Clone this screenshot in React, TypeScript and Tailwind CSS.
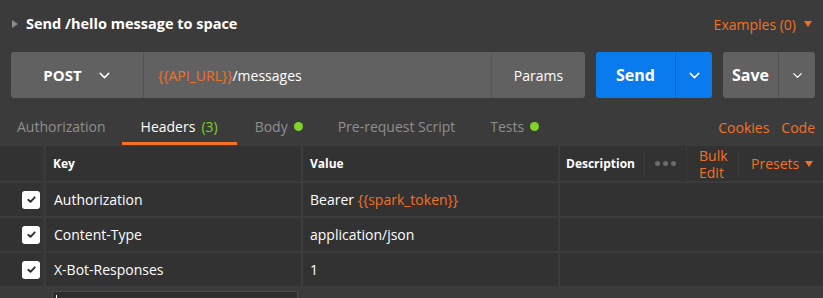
import { ChevronDown } from "lucide-react";

const orange = "text-[#f47023]";

function Check() {
  return (
    <div className="flex h-[18px] w-[18px] items-center justify-center rounded-[3px] bg-white">
      <svg viewBox="0 0 12 12" className="h-[11px] w-[11px]" fill="none" stroke="#2b2b2b" strokeWidth={2} strokeLinecap="round" strokeLinejoin="round">
        <path d="M2.5 6.3l2.4 2.3 4.6-5" />
      </svg>
    </div>
  );
}

function Tab({ label, active, extra, pad }: { label: string; active?: boolean; extra?: React.ReactNode; pad: string }) {
  return (
    <div
      className={`flex h-full items-center gap-[6px] border-b-[3px] ${pad} ${
        active ? "border-[#f47023] text-white" : "border-transparent text-[#8e8e8e]"
      }`}
    >
      <span>{label}</span>
      {extra}
    </div>
  );
}

const rows = [
  { key: "Authorization", value: <span>Bearer <span className={orange}>{"{{spark_token}}"}</span></span> },
  { key: "Content-Type", value: <span>application/json</span> },
  { key: "X-Bot-Responses", value: <span>1</span> },
];

export default function App() {
  return (
    <div
      className="h-[298px] w-[823px] overflow-hidden bg-[#3b3b3b] text-[13px] text-white"
      style={{ fontFamily: '"Open Sans", "Noto Sans", sans-serif' }}
    >
      {/* title */}
      <div className="flex h-[48px] items-center justify-between pl-[12px] pr-[11px]">
        <div className="flex items-center gap-[8px]">
          <svg viewBox="0 0 6 8" className="h-[8px] w-[6px]">
            <path d="M0 0l6 4-6 4z" fill="#8a8a8a" />
          </svg>
          <span className="text-[14.5px] font-bold">Send /hello message to space</span>
        </div>
        <div className={`flex items-center gap-[8px] text-[14px] ${orange}`}>
          <span>Examples (0)</span>
          <svg viewBox="0 0 8 6" className="h-[6px] w-[8px]">
            <path d="M0 0h8l-4 6z" fill="#f47023" />
          </svg>
        </div>
      </div>

      {/* request bar */}
      <div className="mt-[4px] flex h-[46px] gap-[11px] pl-[11px] pr-[8px]">
        <div className="flex w-[574px] overflow-hidden rounded-[3px] bg-[#616161]">
          <div className="flex w-[133px] items-center justify-center gap-[14px] border-r border-[#525252] pl-[2px]">
            <span className="text-[15px] font-bold">POST</span>
            <ChevronDown size={17} strokeWidth={2} />
          </div>
          <div className="flex flex-1 items-center border-r border-[#555555] pl-[14px] text-[14px]">
            <span className={orange}>{"{{API_URL}}"}</span>
            <span>/messages</span>
          </div>
          <div className="flex w-[93px] items-center justify-center text-[14px]">Params</div>
        </div>
        <div className="flex w-[116px] overflow-hidden rounded-[3px] bg-[#097bed]">
          <div className="flex w-[80px] items-center justify-center border-r border-[#0a66c2] text-[16px] font-bold">Send</div>
          <div className="flex flex-1 items-center justify-center">
            <ChevronDown size={17} strokeWidth={2} />
          </div>
        </div>
        <div className="flex w-[92px] overflow-hidden rounded-[3px] bg-[#616161]">
          <div className="flex w-[56px] items-center justify-center border-r border-[#525252] text-[16px] font-bold">Save</div>
          <div className="flex flex-1 items-center justify-center">
            <ChevronDown size={15} strokeWidth={2} />
          </div>
        </div>
      </div>

      {/* tabs */}
      <div className="mt-[12px] flex h-[35px] items-stretch justify-between pr-[8px] text-[14px]">
        <div className="flex">
          <Tab label="Authorization" pad="pl-[17px] pr-[16px]" />
          <Tab label="Headers" active pad="px-[19px]" extra={<span className="text-[#7fd12b]">(3)</span>} />
          <Tab label="Body" pad="px-[18px]" extra={<span className="h-[9px] w-[9px] rounded-full bg-[#7fd12b]" />} />
          <Tab label="Pre-request Script" pad="px-[17px]" />
          <Tab label="Tests" pad="px-[18px]" extra={<span className="h-[9px] w-[9px] rounded-full bg-[#7fd12b]" />} />
        </div>
        <div className={`flex items-center gap-[12px] ${orange}`}>
          <span>Cookies</span>
          <span>Code</span>
        </div>
      </div>

      {/* table */}
      <div className="mt-px flex flex-col gap-[2px] bg-[#3b3b3b]">
        <div className="flex h-[35px] gap-[2px]">
          <div className="w-[44px] border-r-[3px] border-[#363636] bg-[#323232]" />
          <div className="flex w-[255px] items-center bg-[#323232] pl-[7px] text-[12px] font-bold">Key</div>
          <div className="flex w-[255px] items-center bg-[#323232] pl-[7px] text-[12px] font-bold">Value</div>
          <div className="flex flex-1 items-center bg-[#323232] text-[12px]">
            <div className="flex w-[84px] items-center pl-[6px] font-bold">Description</div>
            <div className="flex h-[22px] w-[42px] items-center justify-center gap-[3px] border-l border-[#3c3c3c]">
              <span className="h-[5px] w-[5px] rounded-full bg-[#6a6a6a]" />
              <span className="h-[5px] w-[5px] rounded-full bg-[#6a6a6a]" />
              <span className="h-[5px] w-[5px] rounded-full bg-[#6a6a6a]" />
            </div>
            <div className={`flex h-full w-[52px] items-center border-l border-[#3c3c3c] pl-[12px] text-[14px] leading-[17px] ${orange}`}>
              <span>
                Bulk
                <br />
                Edit
              </span>
            </div>
            <div className={`flex h-[22px] flex-1 items-center gap-[6px] border-l border-[#3c3c3c] pl-[12px] text-[14px] ${orange}`}>
              <span>Presets</span>
              <svg viewBox="0 0 8 6" className="h-[6px] w-[8px]">
                <path d="M0 0h8l-4 6z" fill="#f47023" />
              </svg>
            </div>
          </div>
        </div>
        {rows.map((r) => (
          <div key={r.key} className="flex h-[33px] gap-[2px]">
            <div className="flex w-[44px] items-center justify-end border-r-[3px] border-[#363636] bg-[#323232] pr-[1px]">
              <Check />
            </div>
            <div className="flex w-[255px] items-center bg-[#323232] pl-[8px] text-[14px]">{r.key}</div>
            <div className="flex w-[255px] items-center bg-[#323232] pl-[7px] text-[14px]">{r.value}</div>
            <div className="flex-1 bg-[#323232]" />
          </div>
        ))}
        <div className="flex h-[20px] pt-[3px]">
          <div className="ml-[52px] h-[20px] w-[246px] border border-[#4a4a4a] bg-[#2e2e2e] pl-[3px] pt-[3px]">
            <div className="h-[14px] w-px bg-white" />
          </div>
        </div>
      </div>
    </div>
  );
}
